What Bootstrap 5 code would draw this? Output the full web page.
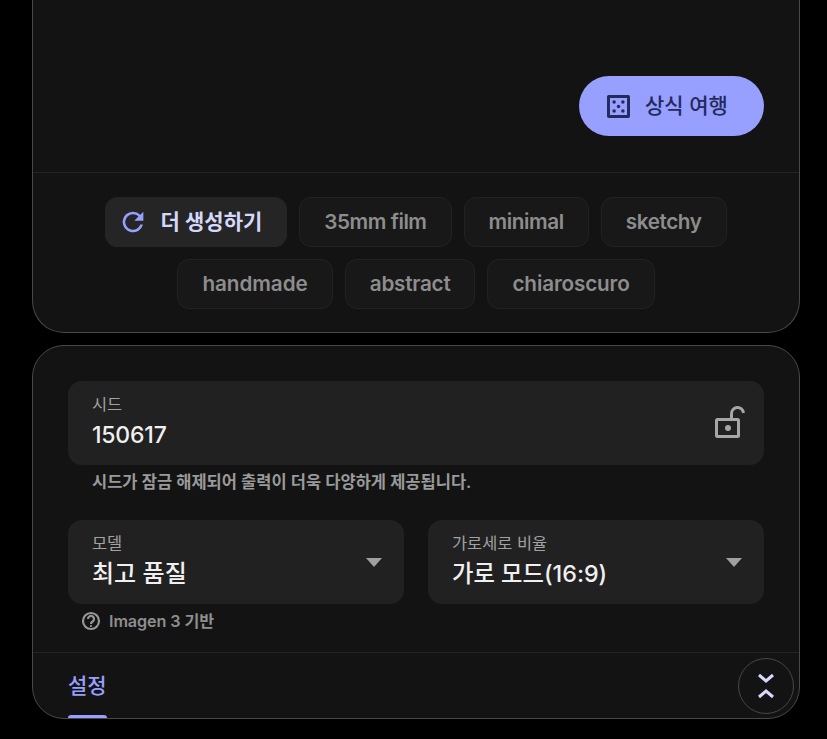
<!DOCTYPE html>
<html lang="ko">
<head>
<meta charset="utf-8">
<title>설정</title>
<link rel="stylesheet" href="https://cdn.jsdelivr.net/npm/bootstrap@5.3.0/dist/css/bootstrap.min.css">
<style>
html,body{background:#000;margin:0;height:739px;overflow:hidden}
body{font-family:Inter,"Noto Sans CJK KR",sans-serif;color:#e3e3e3}
.shell{width:768px;margin-left:32px;padding-bottom:21px}
.panel{background:#131313;border:1px solid #484848;box-sizing:border-box}
.panel-top{height:333px;border-top:0;border-radius:0 0 32px 32px}
.panel-low{height:374px;margin-top:12px;border-radius:32px;position:relative;overflow:hidden}
.hero{height:173px;padding-top:76px;padding-right:35px;border-bottom:1px solid #232323}
.surprise{height:60px;width:185px;border-radius:30px;background:#979fff;color:#232a5c;font-size:21px;gap:15px;padding-right:8px;font-weight:500}
.chips{padding-top:24px;gap:12px;width:100%}
.chip-row{gap:12px}
.chip{height:50px;padding:0 24px;border-radius:12px;border:1px solid #222;background:#181818;color:#8d8d8d;font-size:20.7px;font-weight:600;letter-spacing:-.25px;white-space:nowrap}
.chip-on{background:#252525;border-color:#252525;color:#d5d8fb;padding:0 24px 0 16px;gap:16px;font-size:21px;letter-spacing:0}
.chip-tighter{letter-spacing:-.45px}
.chip-tight{letter-spacing:-.4px}
.chip-loose{letter-spacing:-.05px}
.chip-looser{letter-spacing:-.15px}
.form-area{padding:35px 35px 0}
.field{background:#212121;border-radius:14px;height:84px;padding:12px 24px}
.field-label{font-size:16.4px;line-height:22px;color:#a2a2a2;margin-bottom:1px}
.field-value{font-size:24px;line-height:37px;color:#f0f0f0;font-weight:500}
.value-num{font-size:23px;letter-spacing:-.2px;margin-top:2px}
.value-mix{font-size:23.3px}
.lock-ico{margin-right:-8px}
.hint{font-size:16.5px;line-height:20px;color:#9a9a9a;font-weight:600;padding:7px 0 0 24px}
.sel-grid{gap:24px;margin-top:28px}
.caret{width:0;height:0;margin-right:-2px;border-left:8.500px solid transparent;border-right:8.500px solid transparent;border-top:9px solid #a0a0a0}
.sub-hint{font-size:16.200px;line-height:22px;color:#8e8e8e;font-weight:600;gap:8px;padding:6px 0 0 13px;letter-spacing:-.1px}
.tab-bar{position:absolute;left:0;right:0;top:306px;height:66px;border-top:1px solid #232323}
.tab-label{position:absolute;left:35px;top:18px;font-size:21px;line-height:30px;color:#979fff;font-weight:500}
.tab-mark{position:absolute;left:35px;bottom:0;width:39px;height:3px;background:#979fff;border-radius:3px 3px 0 0}
.fab{position:absolute;left:705px;top:312px;width:56px;height:56px;border-radius:50%;border:1px solid #484848;background:#131313}
</style>
</head>
<body>
<div class="shell">
  <section class="panel panel-top">
    <div class="hero d-flex justify-content-end align-items-start">
      <div class="surprise d-flex align-items-center justify-content-center">
        <svg width="23" height="23" viewBox="1.500 1.500 21 21" fill="#232a5c"><path fill-rule="evenodd" d="M3 1.500h18A1.500 1.500 0 0 1 22.500 3v18a1.500 1.500 0 0 1-1.500 1.500H3A1.500 1.500 0 0 1 1.500 21V3A1.500 1.500 0 0 1 3 1.500zM4.200 4.200v15.600h15.600V4.200z"/><circle cx="8" cy="8" r="1.600"/><circle cx="16" cy="8" r="1.600"/><circle cx="12" cy="12" r="1.600"/><circle cx="8" cy="16" r="1.600"/><circle cx="16" cy="16" r="1.600"/></svg>
        <span>상식 여행</span>
      </div>
    </div>
    <div class="chips d-flex flex-column align-items-center">
      <div class="chip-row d-flex">
        <div class="chip chip-on d-flex align-items-center">
          <svg width="22" height="22" viewBox="3.500 3.500 17 17" fill="#979fff"><path d="M17.650 6.350A7.960 7.960 0 0 0 12 4a8 8 0 1 0 7.730 10h-2.080A6 6 0 1 1 12 6c1.660 0 3.140.69 4.220 1.780L13 11h7V4z"/></svg>
          <span>더 생성하기</span>
        </div>
        <div class="chip chip-tighter d-flex align-items-center">35mm film</div>
        <div class="chip chip-tight d-flex align-items-center">minimal</div>
        <div class="chip chip-tight d-flex align-items-center">sketchy</div>
      </div>
      <div class="chip-row d-flex">
        <div class="chip chip-loose d-flex align-items-center">handmade</div>
        <div class="chip d-flex align-items-center">abstract</div>
        <div class="chip chip-looser d-flex align-items-center">chiaroscuro</div>
      </div>
    </div>
  </section>
  <section class="panel panel-low">
    <div class="form-area">
      <div class="field d-flex justify-content-between align-items-center">
        <div>
          <div class="field-label">시드</div>
          <div class="field-value value-num">150617</div>
        </div>
        <svg class="lock-ico" width="36" height="36" viewBox="0 0 36 36" fill="none" stroke="#a6a6a6" stroke-width="3"><rect x="4.500" y="14.500" width="22" height="17" rx="1"/><path d="M19.500 14V9a6 6 0 0 1 12-1"/><circle cx="16" cy="23" r="3" fill="#a6a6a6" stroke="none"/></svg>
      </div>
      <div class="hint">시드가 잠금 해제되어 출력이 더욱 다양하게 제공됩니다.</div>
      <div class="sel-grid d-flex">
        <div class="field flex-fill w-50 d-flex justify-content-between align-items-center">
          <div>
            <div class="field-label">모델</div>
            <div class="field-value">최고 품질</div>
          </div>
          <div class="caret"></div>
        </div>
        <div class="field flex-fill w-50 d-flex justify-content-between align-items-center">
          <div>
            <div class="field-label">가로세로 비율</div>
            <div class="field-value value-mix">가로 모드(16:9)</div>
          </div>
          <div class="caret"></div>
        </div>
      </div>
      <div class="sub-hint d-flex align-items-center">
        <svg width="20" height="20" viewBox="0 0 20 20" fill="none" stroke="#979797" stroke-width="2.200"><circle cx="10" cy="10" r="8"/><path d="M7 8a3 3 0 1 1 4.600 2.500c-1 .7-1.600 1.200-1.600 2.500"/><circle cx="10" cy="15" r=".5" fill="#979797" stroke-width="1.200"/></svg>
        <span>Imagen 3 기반</span>
      </div>
    </div>
    <div class="tab-bar">
      <span class="tab-label">설정</span>
      <span class="tab-mark"></span>
    </div>
    <div class="fab d-flex align-items-center justify-content-center">
      <svg width="24" height="32" viewBox="0 0 24 32" fill="none" stroke="#d5d8fb" stroke-width="3"><path d="M5 5l7 6 7-6M5 27l7-6 7 6"/></svg>
    </div>
  </section>
</div>
</body>
</html>
